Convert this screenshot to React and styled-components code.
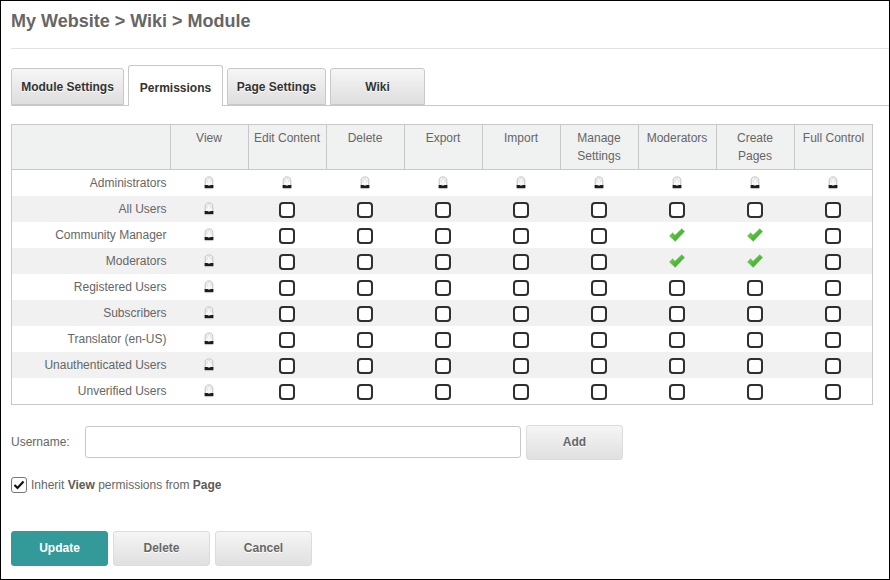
import React from 'react';
import styled, { createGlobalStyle } from 'styled-components';

const GlobalStyle = createGlobalStyle`
  html, body { margin: 0; padding: 0; background: #fff; }
  body { font-family: "Liberation Sans", Arial, sans-serif; color: #666; }
`;

const Page = styled.div`
  box-sizing: border-box;
  width: 890px;
  height: 580px;
  border: 1px solid #000;
  overflow: hidden;
`;

const Title = styled.h1`
  margin: 0 0 0 10px;
  height: 48px;
  box-sizing: border-box;
  padding-top: 9px;
  font-size: 18px;
  line-height: 22px;
  font-weight: bold;
  color: #666;
  border-bottom: 1px solid #e2e2e2;
`;

const Tabs = styled.div`
  display: flex;
  align-items: flex-end;
  gap: 4px;
  height: 57px;
  box-sizing: border-box;
  margin-left: 10px;
  border-bottom: 1px solid #c8c8c8;
`;

const Tab = styled.div`
  box-sizing: border-box;
  width: ${p => p.$w}px;
  height: ${p => (p.$active ? 41 : 37)}px;
  margin-bottom: ${p => (p.$active ? -1 : 0)}px;
  padding-top: ${p => (p.$active ? 14 : 10)}px;
  text-align: center;
  font-size: 12px;
  line-height: 16px;
  font-weight: bold;
  color: #333;
  border: 1px solid #c8c8c8;
  border-bottom: ${p => (p.$active ? 'none' : '1px solid #c8c8c8')};
  border-radius: 3px 3px 0 0;
  background: ${p => (p.$active ? '#fff' : 'linear-gradient(#f6f6f6, #dedede)')};
  text-shadow: ${p => (p.$active ? 'none' : '0 1px 0 #fff')};
`;

const Grid = styled.table`
  border-collapse: collapse;
  table-layout: fixed;
  width: 862px;
  margin: 18px 0 0 10px;
  border: 1px solid #c8c8c8;
`;

const HeadCell = styled.th`
  box-sizing: border-box;
  width: 78px;
  height: 45px;
  padding: 4px 1px 0 0;
  vertical-align: top;
  text-align: center;
  font-size: 12px;
  line-height: 18px;
  font-weight: normal;
  color: #666;
  background: #f0f1f1;
  border: 1px solid #c8c8c8;
  border-top: none;
  &:last-child { padding-right: 0; }
`;

const CornerCell = styled(HeadCell)`
  width: 159px;
`;

const Row = styled.tr`
  background: ${p => (p.$odd ? '#f1f1f1' : '#fff')};
`;

const RoleCell = styled.td`
  height: 26px;
  padding: 0 4px 0 0;
  box-sizing: border-box;
  text-align: right;
  font-size: 12px;
  line-height: 26px;
  color: #666;
`;

const PermCell = styled.td`
  height: 26px;
  padding: 0 1px 0 0;
  text-align: center;
  vertical-align: middle;
  line-height: 0;
  &:last-child { padding-right: 0; }
`;

const Box = styled.span`
  display: inline-block;
  box-sizing: border-box;
  width: 16px;
  height: 16px;
  margin-top: 2px;
  border: 2px solid #2f2f2f;
  border-radius: 4px;
  background: #fff;
`;

const IconSvg = styled.svg`
  display: inline-block;
  vertical-align: middle;
`;

const Lock = () => (
  <IconSvg width="10" height="14" viewBox="0 0 10 14">
    <path d="M1.2 9.5V4.2C1.2 2 2.8 .9 5 .9s3.8 1.1 3.8 3.3V9.5Z" fill="#f7f7f7" stroke="#c0c0c0" strokeWidth="1" />
    <path d="M3 6.2V4.4C3 3.2 3.9 2.6 5 2.6s2 .6 2 1.8V6.2" fill="none" stroke="#d4d4d4" strokeWidth=".8" />
    <rect x="0.6" y="9" width="8.8" height="3.2" fill="#1c1c1c" />
    <rect x="3.8" y="9" width="2.4" height="1" fill="#8a8a8a" />
    <rect x="1.2" y="12.2" width="7.6" height=".9" fill="#c4c4c4" />
  </IconSvg>
);

const Check = () => (
  <IconSvg width="16" height="14" viewBox="0 0 16 14">
    <defs>
      <linearGradient id="tick" x1="0" y1="0" x2="1" y2="1">
        <stop offset="0" stopColor="#7bdc48" />
        <stop offset="1" stopColor="#2a9a2a" />
      </linearGradient>
    </defs>
    <path d="M0.3 8 L3.6 4.6 L6 7 L12.8 .5 L15.8 3.6 L6.2 13.6 Z" fill="url(#tick)" stroke="#a9c9a2" strokeWidth=".5" />
  </IconSvg>
);

const UserRow = styled.div`
  display: flex;
  align-items: center;
  margin: 20px 0 0 10px;
`;

const FieldLabel = styled.label`
  width: 74px;
  margin-bottom: 2px;
  font-size: 12px;
  color: #666;
`;

const TextInput = styled.div`
  box-sizing: border-box;
  width: 436px;
  height: 32px;
  margin-bottom: 1px;
  border: 1px solid #c8c8c8;
  border-radius: 3px;
  background: #fff;
`;

const Button = styled.div`
  box-sizing: border-box;
  width: 97px;
  height: 35px;
  line-height: 33px;
  text-align: center;
  font-size: 12px;
  font-weight: bold;
  border-radius: 3px;
  color: ${p => (p.$primary ? '#fff' : '#666')};
  border: 1px solid ${p => (p.$primary ? '#339999' : '#dcdcdc')};
  background: ${p => (p.$primary ? '#339999' : 'linear-gradient(#f5f5f5, #e0e0e0)')};
  text-shadow: ${p => (p.$primary ? 'none' : '0 1px 0 #fff')};
`;

const AddButton = styled(Button)`
  margin-left: 5px;
`;

const InheritRow = styled.div`
  display: flex;
  align-items: center;
  gap: 4px;
  margin: 17px 0 0 10px;
  font-size: 12px;
  color: #666;
`;

const InheritBox = styled.span`
  box-sizing: border-box;
  width: 16px;
  height: 16px;
  border: 1px solid #777;
  border-radius: 3px;
  display: flex;
  align-items: center;
  justify-content: center;
  background: #fff;
`;

const Strong = styled.b`
  color: #5a5a5a;
`;

const Actions = styled.div`
  display: flex;
  gap: 5px;
  margin: 38px 0 0 10px;
`;

const columns = [
  ['View'], ['Edit Content'], ['Delete'], ['Export'], ['Import'],
  ['Manage', 'Settings'], ['Moderators'], ['Create', 'Pages'], ['Full Control'],
];

const roles = [
  'Administrators', 'All Users', 'Community Manager', 'Moderators', 'Registered Users',
  'Subscribers', 'Translator (en-US)', 'Unauthenticated Users', 'Unverified Users',
];

const tabs = [
  { label: 'Module Settings', w: 113 },
  { label: 'Permissions', w: 95, active: true },
  { label: 'Page Settings', w: 99 },
  { label: 'Wiki', w: 95 },
];

const isChecked = (role, col) =>
  (role === 'Community Manager' || role === 'Moderators') && (col === 6 || col === 7);

const cellContent = (role, col) => {
  if (role === 'Administrators' || col === 0) return <Lock />;
  if (isChecked(role, col)) return <Check />;
  return <Box />;
};

export default function App() {
  return (
    <Page>
      <GlobalStyle />
      <Title>My Website &gt; Wiki &gt; Module</Title>
      <Tabs>
        {tabs.map(t => (
          <Tab key={t.label} $w={t.w} $active={t.active}>{t.label}</Tab>
        ))}
      </Tabs>
      <Grid>
        <thead>
          <tr>
            <CornerCell />
            {columns.map(lines => (
              <HeadCell key={lines[0]}>
                {lines.map((l, i) => (
                  <React.Fragment key={l}>{i > 0 && <br />}{l}</React.Fragment>
                ))}
              </HeadCell>
            ))}
          </tr>
        </thead>
        <tbody>
          {roles.map((role, r) => (
            <Row key={role} $odd={r % 2 === 1}>
              <RoleCell>{role}</RoleCell>
              {columns.map((_, c) => (
                <PermCell key={c}>{cellContent(role, c)}</PermCell>
              ))}
            </Row>
          ))}
        </tbody>
      </Grid>
      <UserRow>
        <FieldLabel>Username:</FieldLabel>
        <TextInput />
        <AddButton>Add</AddButton>
      </UserRow>
      <InheritRow>
        <InheritBox>
          <IconSvg width="12" height="10" viewBox="0 0 12 10">
            <path d="M1.5 5 L4.5 8 L10.5 1.5" fill="none" stroke="#111" strokeWidth="2.2" />
          </IconSvg>
        </InheritBox>
        <span>Inherit <Strong>View</Strong> permissions from <Strong>Page</Strong></span>
      </InheritRow>
      <Actions>
        <Button $primary>Update</Button>
        <Button>Delete</Button>
        <Button>Cancel</Button>
      </Actions>
    </Page>
  );
}
